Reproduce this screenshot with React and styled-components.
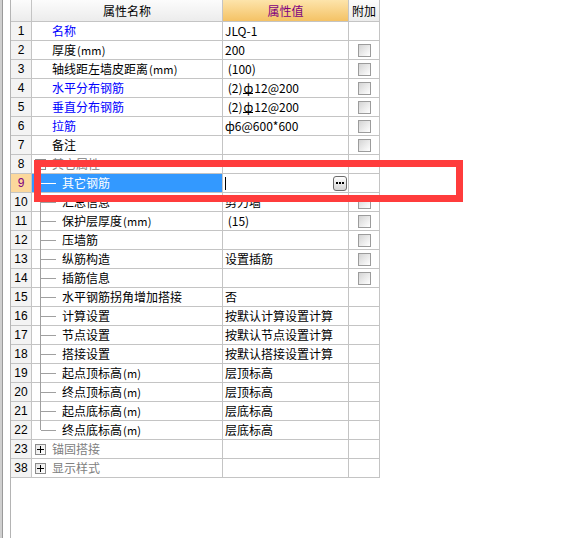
import React from 'react';
import styled, { createGlobalStyle, css } from 'styled-components';

const GlobalStyle = createGlobalStyle`
  html, body {
    margin: 0;
    padding: 0;
    background: #ffffff;
  }
  body {
    font-family: "Noto Sans CJK SC", "Liberation Sans", sans-serif;
    font-size: 12px;
    color: #000000;
  }
`;

const Page = styled.div`
  position: relative;
  display: flex;
  height: 100vh;
  overflow: hidden;
`;

const Strip = styled.div`
  width: 2px;
  background: #cfcfcf;
  border-right: 1px solid #9a9a9a;
  flex: none;
`;

const Panel = styled.div`
  margin-left: 7px;
  border-left: 1px solid #b4b4b4;
  flex: 1;
`;

const Grid = styled.div`
  display: flex;
  flex-direction: column;
  gap: 1px;
  width: 368px;
  background: #c4c4c4;
  border-right: 1px solid #c4c4c4;
  border-bottom: 1px solid #c4c4c4;
`;

const Row = styled.div`
  display: grid;
  grid-template-columns: 20px 190px 125px 30px;
  column-gap: 1px;
  height: ${p => (p.$header ? 21 : 18)}px;
`;

const Cell = styled.div`
  display: flex;
  align-items: center;
  background: #ffffff;
  white-space: pre;
  overflow: hidden;
  line-height: 18px;
`;

const HeadCell = styled(Cell)`
  justify-content: center;
  background: ${p => (p.$accent
    ? 'linear-gradient(#fde4ab, #f4c265)'
    : 'linear-gradient(#fcfcfc, #ececec)')};
  color: ${p => (p.$accent ? '#800080' : '#000000')};
  line-height: 21px;
`;

const NumCell = styled(Cell)`
  justify-content: center;
  background: ${p => (p.$active ? '#fcd89c' : '#f3f3f3')};
  color: ${p => (p.$active ? '#800080' : '#000000')};
  font-family: "Liberation Sans", sans-serif;
`;

const NameCell = styled(Cell)`
  position: relative;
  padding-left: ${p => (p.$tree ? 30 : p.$group ? 3 : 20)}px;
  color: ${p => (p.$selected ? '#ffffff' : p.$tone === 'blue' ? '#0000ff' : p.$tone === 'gray' ? '#808080' : '#000000')};
  background: ${p => (p.$selected ? '#3399ff' : '#ffffff')};
  overflow: visible;

  ${p => p.$tree && css`
    &::before {
      content: '';
      position: absolute;
      left: 8px;
      top: -1px;
      height: ${p.$last ? '10px' : '19px'};
      border-left: 1px solid ${p.$selected ? '#3399ff' : '#a0a0a0'};
    }
    &::after {
      content: '';
      position: absolute;
      left: 9px;
      top: 9px;
      width: 15px;
      border-top: 1px solid ${p.$selected ? '#ffffff' : '#a0a0a0'};
    }
  `}
`;

const ToggleBox = styled.span`
  position: relative;
  width: 9px;
  height: 9px;
  margin-right: 6px;
  border: 1px solid #8c8c8c;
  background: linear-gradient(135deg, #e4e4e4, #ffffff);
  flex: none;

  &::before {
    content: '';
    position: absolute;
    left: 1px;
    top: 4px;
    width: 7px;
    border-top: 1px solid #000000;
  }

  ${p => !p.$open && css`
    &::after {
      content: '';
      position: absolute;
      left: 4px;
      top: 1px;
      height: 7px;
      border-left: 1px solid #000000;
    }
  `}
`;

const ValueCell = styled(Cell)`
  padding-left: 2px;
  justify-content: ${p => (p.$editing ? 'space-between' : 'flex-start')};
`;

const AttachCell = styled(Cell)`
  justify-content: center;
`;

const Unit = styled.span`
  font-size: 11px;
  letter-spacing: 0.2px;
  margin-left: 1px;
`;

const Rebar = styled.span`
  display: inline-block;
  line-height: 11px;
  border-bottom: 1px solid #000000;
  margin: 0 1px;
`;

const CheckBox = styled.span`
  width: 11px;
  height: 11px;
  border: 1px solid #9c9c9c;
  background: linear-gradient(135deg, #d4d4d4, #ffffff);
`;

const Caret = styled.span`
  width: 1px;
  height: 13px;
  background: #000000;
`;

const EllipsisButton = styled.button`
  box-sizing: content-box;
  display: flex;
  align-items: center;
  justify-content: center;
  gap: 1px;
  width: 12px;
  height: 13px;
  margin: 0 1px 0 0;
  padding: 0;
  border: 1px solid #6c6c6c;
  border-radius: 3px;
  background: linear-gradient(#ffffff, #d4d4d4);
  flex: none;

  span {
    width: 2px;
    height: 2px;
    background: #000000;
  }
`;

const Highlight = styled.div`
  position: absolute;
  left: 34px;
  top: 160px;
  width: 415px;
  height: 28px;
  border: 7px solid #ff3c3c;
  pointer-events: none;
`;

const units = { mm: '(mm)', m: '(m)' };

const rows = [
  { n: 1, name: '名称', tone: 'blue', value: 'JLQ-1' },
  { n: 2, name: '厚度', unit: 'mm', value: '200', check: true },
  { n: 3, name: '轴线距左墙皮距离', unit: 'mm', value: ' (100)', check: true },
  { n: 4, name: '水平分布钢筋', tone: 'blue', value: [' (2)', 'ф', '12@200'], check: true },
  { n: 5, name: '垂直分布钢筋', tone: 'blue', value: [' (2)', 'ф', '12@200'], check: true },
  { n: 6, name: '拉筋', tone: 'blue', value: 'ф6@600*600', check: true },
  { n: 7, name: '备注', value: '', check: true },
  { n: 8, name: '其它属性', group: true, open: true },
  { n: 9, name: '其它钢筋', tree: true, selected: true, editing: true },
  { n: 10, name: '汇总信息', tree: true, value: '剪力墙', check: true },
  { n: 11, name: '保护层厚度', unit: 'mm', tree: true, value: ' (15)', check: true },
  { n: 12, name: '压墙筋', tree: true, value: '', check: true },
  { n: 13, name: '纵筋构造', tree: true, value: '设置插筋', check: true },
  { n: 14, name: '插筋信息', tree: true, value: '', check: true },
  { n: 15, name: '水平钢筋拐角增加搭接', tree: true, value: '否' },
  { n: 16, name: '计算设置', tree: true, value: '按默认计算设置计算' },
  { n: 17, name: '节点设置', tree: true, value: '按默认节点设置计算' },
  { n: 18, name: '搭接设置', tree: true, value: '按默认搭接设置计算' },
  { n: 19, name: '起点顶标高', unit: 'm', tree: true, value: '层顶标高' },
  { n: 20, name: '终点顶标高', unit: 'm', tree: true, value: '层顶标高' },
  { n: 21, name: '起点底标高', unit: 'm', tree: true, value: '层底标高' },
  { n: 22, name: '终点底标高', unit: 'm', tree: true, value: '层底标高', last: true },
  { n: 23, name: '锚固搭接', group: true },
  { n: 38, name: '显示样式', group: true },
];

const renderValue = (value) => {
  if (Array.isArray(value)) {
    return (
      <span>
        {value[0]}
        <Rebar>{value[1]}</Rebar>
        {value[2]}
      </span>
    );
  }
  return value;
};

const App = () => (
  <>
    <GlobalStyle />
    <Page>
      <Strip />
      <Panel>
        <Grid>
          <Row $header>
            <HeadCell />
            <HeadCell>属性名称</HeadCell>
            <HeadCell $accent>属性值</HeadCell>
            <HeadCell>附加</HeadCell>
          </Row>
          {rows.map(r => (
            <Row key={r.n}>
              <NumCell $active={r.selected}>{r.n}</NumCell>
              <NameCell
                $tree={r.tree}
                $group={r.group}
                $last={r.last}
                $selected={r.selected}
                $tone={r.group ? 'gray' : r.tone}
              >
                {r.group && <ToggleBox $open={r.open} />}
                {r.name}
                {r.unit && <Unit>{units[r.unit]}</Unit>}
              </NameCell>
              <ValueCell $editing={r.editing}>
                {r.editing ? (
                  <>
                    <Caret />
                    <EllipsisButton>
                      <span /><span /><span />
                    </EllipsisButton>
                  </>
                ) : renderValue(r.value)}
              </ValueCell>
              <AttachCell>{r.check && <CheckBox />}</AttachCell>
            </Row>
          ))}
        </Grid>
      </Panel>
      <Highlight />
    </Page>
  </>
);

export default App;
